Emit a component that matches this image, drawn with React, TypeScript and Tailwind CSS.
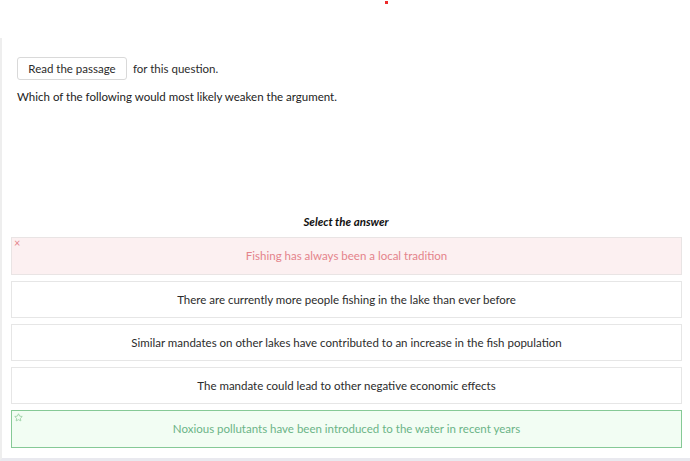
import React from "react";

const font = { fontFamily: "Lato, 'Open Sans', sans-serif" };

function Card({ text, kind }: { text: string; kind?: "wrong" | "right" }) {
  const base =
    kind === "wrong"
      ? "h-[38px] bg-[#fcf0f1] border-[#e9e4e4] text-[#e4838b]"
      : kind === "right"
      ? "h-[38px] bg-[#f2fdf3] border-[#86c996] text-[#6bb487]"
      : "h-[37px] bg-white border-[#e6e6e6] text-[#2b2b2b]";
  return (
    <div className={`relative border flex items-center justify-center text-[11.5px] ${base}`}>
      {kind === "wrong" && (
        <span className="absolute left-[2px] top-[-1px] text-[11px] leading-none text-[#e4838b]">×</span>
      )}
      {kind === "right" && (
        <svg className="absolute left-[2px] top-[2px]" width="9" height="9" viewBox="0 0 24 24" fill="none" stroke="#9fd3a9" strokeWidth="2.5" strokeLinejoin="round">
          <path d="M12 2l3.1 6.3 6.9 1-5 4.9 1.2 6.8L12 17.8 5.8 21l1.2-6.8-5-4.9 6.9-1z" />
        </svg>
      )}
      <span>{text}</span>
    </div>
  );
}

export default function App() {
  return (
    <div className="w-[690px] h-[461px] bg-white flex flex-col overflow-hidden" style={font}>
      <div className="relative h-[38px] shrink-0">
        <div className="absolute left-[385px] top-[1px] w-[3px] h-[3px] bg-[#ec2a2a]" />
      </div>
      <div className="flex-1 border-l-2 border-[#eeeeee] border-b-[3px] border-b-[#e9e9ef] flex flex-col">
        <div className="pl-[15px] pt-[19px]">
          <div className="flex items-center gap-[6px]">
            <button className="h-[23px] w-[110px] border border-[#d9d9d9] rounded-[3px] text-[11.5px] text-[#2b2b2b] bg-white">
              Read the passage
            </button>
            <span className="text-[11.5px] text-[#2b2b2b]">for this question.</span>
          </div>
          <div className="mt-[9px] text-[11.5px] leading-[16px] text-[#222]">Which of the following would most likely weaken the argument.</div>
        </div>
        <div className="mt-[109px] text-center text-[11.5px] leading-[16px] italic font-bold text-[#111]">Select the answer</div>
        <div className="mt-[7px] ml-[9px] mr-[8px] flex flex-col gap-[6px]">
          <Card text="Fishing has always been a local tradition" kind="wrong" />
          <Card text="There are currently more people fishing in the lake than ever before" />
          <Card text="Similar mandates on other lakes have contributed to an increase in the fish population" />
          <Card text="The mandate could lead to other negative economic effects" />
          <Card text="Noxious pollutants have been introduced to the water in recent years" kind="right" />
        </div>
      </div>
    </div>
  );
}
